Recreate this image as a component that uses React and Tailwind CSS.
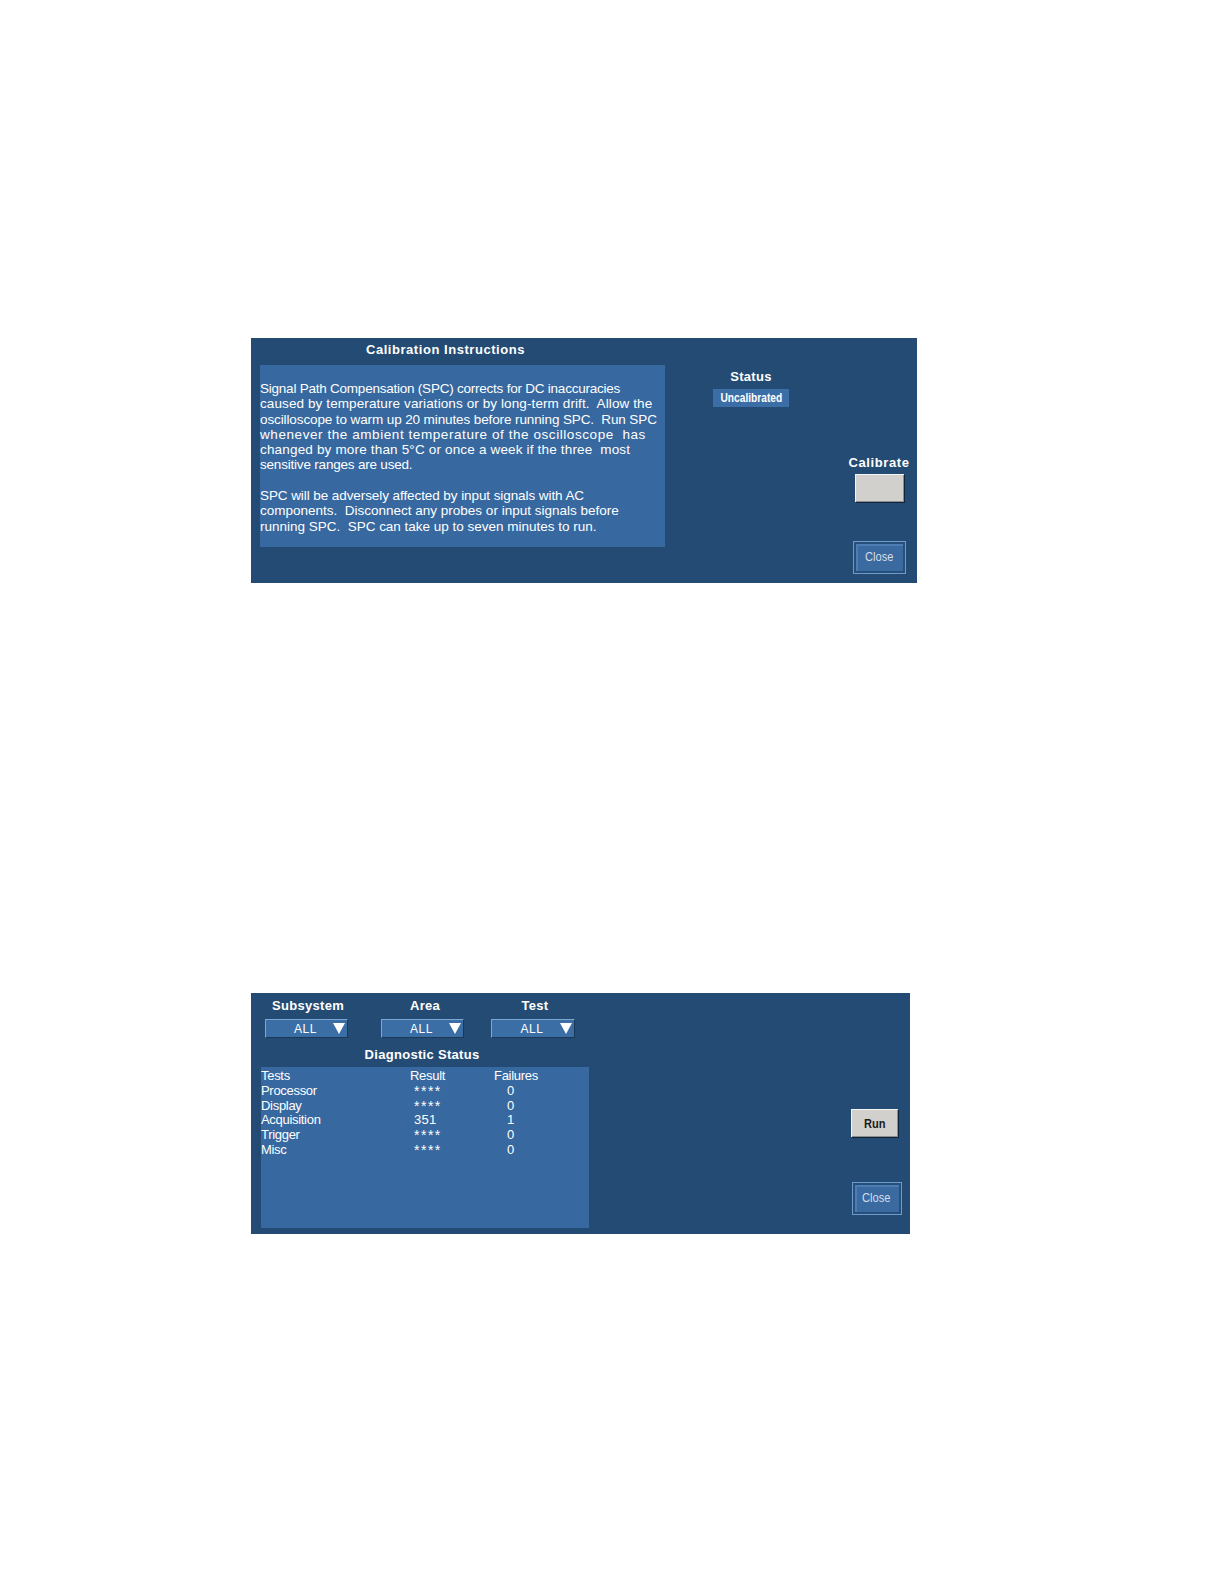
import React from "react";

const bodyFont = { fontFamily: '"Liberation Sans", Arial, sans-serif' };

function Label({ children, className = "" }) {
  return (
    <div
      className={"text-[13px] font-bold leading-[14px] tracking-[0.3px] text-white " + className}
      style={bodyFont}
    >
      {children}
    </div>
  );
}

function GrayButton({ children, className = "" }) {
  return (
    <div
      className={
        "flex items-center justify-center bg-[#d2d0cc] border-t border-l border-[#f4f4f4] shadow-[1px_1px_0_#10243a,inset_-1px_-1px_0_#8e8e8e] text-[13px] font-bold text-[#1a1a1a] " +
        className
      }
      style={bodyFont}
    >
      {children}
    </div>
  );
}

function CloseButton({ className = "" }) {
  return (
    <div
      className={
        "flex items-center justify-center border border-[#6e9bcb] bg-[#3a6aa0] shadow-[inset_0_0_0_2px_#264f7c,inset_1px_1px_0_3px_#4d7db3] text-[13.5px] text-[#d6deea] " +
        className
      }
      style={bodyFont}
    >
      <span className="scale-x-[0.82]">Close</span>
    </div>
  );
}

function Dropdown({ className = "" }) {
  return (
    <div
      className={
        "flex h-[19px] items-center bg-[#3a6ea5] border-t border-l border-[#7ea6d2] border-b border-r border-b-[#1b3857] border-r-[#1b3857] " +
        className
      }
      style={bodyFont}
    >
      <span className="flex-1 pl-[12px] text-center text-[12px] leading-none tracking-[0.6px] text-white">ALL</span>
      <svg width="12" height="11" viewBox="0 0 12 11" className="mr-[2px]">
        <polygon points="0,0 12,0 6,11" fill="#ffffff" />
      </svg>
    </div>
  );
}

const para1 = [
  ["Signal Path Compensation (SPC) corrects for DC inaccuracies", "tracking-[-0.23px]"],
  ["caused by temperature variations or by long-term drift.  Allow the", "tracking-[0.1px]"],
  ["oscilloscope to warm up 20 minutes before running SPC.  Run SPC", "tracking-[-0.11px]"],
  ["whenever the ambient temperature of the oscilloscope  has", "tracking-[0.57px]"],
  ["changed by more than 5°C or once a week if the three  most", "tracking-[0.17px]"],
  ["sensitive ranges are used.", "tracking-[-0.2px]"],
];
const para2 = [
  ["SPC will be adversely affected by input signals with AC", "tracking-[-0.08px]"],
  ["components.  Disconnect any probes or input signals before", "tracking-[0px]"],
  ["running SPC.  SPC can take up to seven minutes to run.", "tracking-[-0.01px]"],
];

const rows = [
  ["Processor", "****", "0"],
  ["Display", "****", "0"],
  ["Acquisition", "351", "1"],
  ["Trigger", "****", "0"],
  ["Misc", "****", "0"],
];

export default function App() {
  return (
    <div className="w-[1224px] h-[1584px] bg-white pt-[338px] pl-[251px]">
      {/* Calibration panel */}
      <div className="flex w-[666px] h-[245px] bg-[#244b73]">
        <div className="ml-[9px] flex w-[405px] flex-col">
          <div className="flex h-[24px] items-center justify-center pr-[34px] mb-[3px]">
            <Label className="tracking-[0.55px]">Calibration Instructions</Label>
          </div>
          <div
            className="h-[182px] bg-[#3768a0] pt-[16px] text-[13.5px] leading-[15.3px] text-white"
            style={bodyFont}
          >
            {para1.map(([l, t], i) => (
              <div key={i} className={"whitespace-pre " + t}>{l}</div>
            ))}
            <div className="h-[15.3px]" />
            {para2.map(([l, t], i) => (
              <div key={i} className={"whitespace-pre " + t}>{l}</div>
            ))}
          </div>
        </div>
        <div className="ml-[48px] flex w-[76px] flex-col items-center pt-[32px]">
          <Label>Status</Label>
          <div
            className="mt-[5px] flex h-[18px] w-[76px] items-center justify-center bg-[#3b6ea7] text-[12px] font-bold text-white"
            style={bodyFont}
          >
            <span className="scale-x-[0.85]">Uncalibrated</span>
          </div>
        </div>
        <div className="ml-auto mr-[8px] flex w-[60px] flex-col items-center pt-[118px]">
          <Label className="tracking-[0.6px]">Calibrate</Label>
          <GrayButton className="mt-[4px] h-[28px] w-[49px]" />
          <CloseButton className="mt-[39px] h-[33px] w-[53px]" />
        </div>
      </div>

      {/* Diagnostics panel */}
      <div className="mt-[410px] flex w-[659px] h-[241px] bg-[#244b73]">
        <div className="flex flex-col">
          <div className="ml-[14px] mt-[6px] flex">
            <div className="flex w-[83px] flex-col items-center">
              <Label className="pl-[3px]">Subsystem</Label>
              <Dropdown className="mt-[6px] w-[83px]" />
            </div>
            <div className="ml-[33px] flex w-[83px] flex-col items-center">
              <Label className="pl-[5px]">Area</Label>
              <Dropdown className="mt-[6px] w-[83px]" />
            </div>
            <div className="ml-[27px] flex w-[84px] flex-col items-center">
              <Label className="pl-[4px]">Test</Label>
              <Dropdown className="mt-[6px] w-[84px]" />
            </div>
          </div>
          <div className="ml-[10px] mt-[10px] flex w-[328px] justify-center">
            <Label className="pr-[6px]">Diagnostic Status</Label>
          </div>
          <div
            className="ml-[10px] mt-[5px] h-[161px] w-[328px] bg-[#3768a0] pt-[2px] text-[13px] leading-[14.8px] tracking-[-0.3px] text-white"
            style={bodyFont}
          >
            <div className="grid grid-cols-[149px_84px_1fr]">
              <div>Tests</div>
              <div>Result</div>
              <div>Failures</div>
              {rows.map(([a, b, c]) => (
                <React.Fragment key={a}>
                  <div>{a}</div>
                  <div className={b === "****" ? "pl-[4px] tracking-[1.5px] text-[14px]" : "pl-[4px] tracking-[0.3px]"}>{b}</div>
                  <div className="pl-[13px]">{c}</div>
                </React.Fragment>
              ))}
            </div>
          </div>
        </div>
        <div className="ml-auto mr-[8px] flex w-[51px] flex-col items-center pt-[116px]">
          <GrayButton className="h-[28px] w-[47px] -ml-[4px]">
            <span className="scale-x-[0.85]">Run</span>
          </GrayButton>
          <CloseButton className="mt-[45px] h-[33px] w-[50px]" />
        </div>
      </div>
    </div>
  );
}
